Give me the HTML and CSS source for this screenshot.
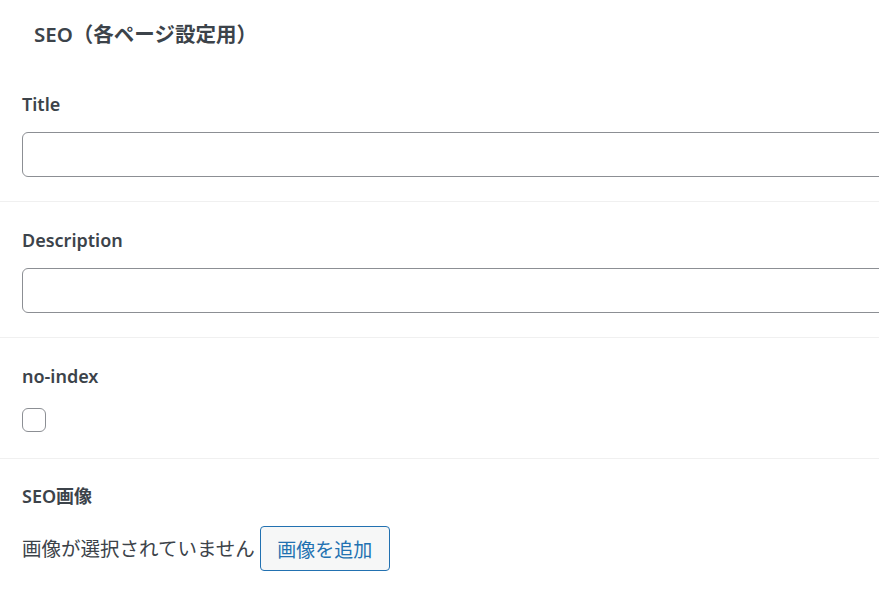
FILE: index.html
```html
<!DOCTYPE html>
<html lang="ja">
<head>
<meta charset="utf-8">
<title>SEO</title>
<link rel="stylesheet" href="styles.css">
</head>
<body>
<div class="box">
  <div class="box-head">
    <h2 class="box-title">SEO（各ページ設定用）</h2>
  </div>
  <div class="field">
    <label class="field-label" for="seo-title">Title</label>
    <input class="text-input" id="seo-title" type="text">
  </div>
  <div class="field">
    <label class="field-label" for="seo-desc">Description</label>
    <input class="text-input" id="seo-desc" type="text">
  </div>
  <div class="field field-check">
    <label class="field-label" for="seo-noindex">no-index</label>
    <input class="check" id="seo-noindex" type="checkbox">
  </div>
  <div class="field field-image">
    <div class="field-label">SEO画像</div>
    <div class="image-row">
      <span class="image-none">画像が選択されていません</span>
      <button class="btn" type="button">画像を追加</button>
    </div>
  </div>
</div>
</body>
</html>
```

FILE: styles.css
```css
* { box-sizing: border-box; }

html, body {
  margin: 0;
  padding: 0;
  background: #ffffff;
  overflow: hidden;
}

body {
  font-family: "Noto Sans", "Noto Sans CJK JP", sans-serif;
  color: #3c434a;
  width: 879px;
  height: 594px;
}

.box {
  width: 960px;
}

.box-head {
  height: 66px;
  padding: 21px 0 0 34px;
}

.box-title {
  margin: 0;
  font-size: 20.5px;
  line-height: 26px;
  font-weight: 600;
  color: #3c434a;
}

.field {
  padding: 26px 0 24px 22px;
  border-bottom: 1px solid #f0f0f0;
}

.field-label {
  display: block;
  font-size: 18px;
  line-height: 24px;
  font-weight: 600;
  color: #3c434a;
}

.text-input {
  display: block;
  margin: 16px 0 0;
  width: 100%;
  height: 45px;
  border: 1px solid #8c8f94;
  border-radius: 6px;
  background: #fff;
  padding: 0 12px;
  font: inherit;
  outline: none;
}

.field-check {
  padding-bottom: 26px;
}

.check {
  display: block;
  appearance: none;
  -webkit-appearance: none;
  margin: 20px 0 0;
  width: 24px;
  height: 24px;
  border: 1px solid #8c8f94;
  border-radius: 6px;
  background: #fff;
}

.field-image {
  padding-top: 25px;
  border-bottom: none;
}

.image-row {
  display: flex;
  align-items: center;
  gap: 5px;
  margin-top: 18px;
}

.image-none {
  font-size: 19.5px;
  line-height: 26px;
  color: #3c434a;
}

.btn {
  height: 45px;
  width: 130px;
  border: 1px solid #2271b1;
  border-radius: 4px;
  background: #f6f7f7;
  color: #2271b1;
  font-family: "Noto Sans", "Noto Sans CJK JP", sans-serif;
  font-size: 19px;
  padding: 0;
  cursor: pointer;
}
```
